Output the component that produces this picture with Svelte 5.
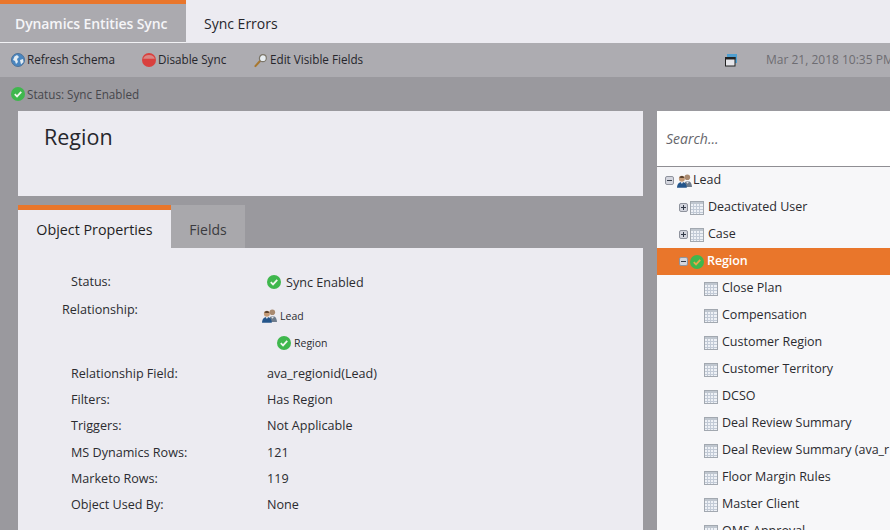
<script>
  const leaves = ['Close Plan','Compensation','Customer Region','Customer Territory','DCSO','Deal Review Summary','Deal Review Summary (ava_r','Floor Margin Rules','Master Client','OMS Approval'];
  const props = [
    ['Relationship Field:','ava_regionid(Lead)'],
    ['Filters:','Has Region'],
    ['Triggers:','Not Applicable'],
    ['MS Dynamics Rows:','121'],
    ['Marketo Rows:','119'],
    ['Object Used By:','None']
  ];
</script>

{#snippet check(size, tick = '#f2f6f0')}
  <svg class="ic" width={size} height={size} viewBox="0 0 16 16"><circle cx="8" cy="8" r="8" fill="#3fb74d"/><path d="M4.300 8.200l2.600 2.600 4.800-5.300" fill="none" stroke={tick} stroke-width="2"/></svg>
{/snippet}
{#snippet users(size)}
  <svg class="ic" width={size} height={size} viewBox="0 0 16 16"><circle cx="11" cy="4.500" r="3" fill="#a98a70"/><path d="M7 15c.3-5 2.200-6.500 4.300-6.500s4.400 1.500 4.700 6.500z" fill="#6f7c8c"/><path d="M9.500 9l1.700 2.500L13 9z" fill="#e6e6ea"/><circle cx="5.200" cy="6" r="3.200" fill="#c49a76"/><path d="M2.500 4.800c1-2.200 4.500-2.200 5.400.2-1.900.6-3.800.5-5.400-.2z" fill="#5a4330"/><path d="M0 15.800c.2-4.800 2.700-6.300 5.200-6.300s5 1.500 5.300 6.300z" fill="#24558a"/><path d="M3.800 9.600l1.400 2.200 1.400-2.200z" fill="#e6e6ea"/></svg>
{/snippet}
{#snippet table()}
  <svg class="tb" width="14" height="14" viewBox="0 0 14 14"><rect x=".5" y=".5" width="13" height="13" fill="#eef1f6" stroke="#a2a8b0"/><rect x="1" y="1" width="12" height="2" fill="#bfc6cf"/><path d="M1 5.500h12M1 8.500h12M1 11.500h12M3.500 3v10M6.500 3v10M9.500 3v10" stroke="#c2cad6" stroke-width="1"/></svg>
{/snippet}
{#snippet toggle(plus)}
  <svg class="ic" width="9" height="9" viewBox="0 0 9 9"><rect x=".5" y=".5" width="8" height="8" rx="1.500" fill="#d3d5de" stroke="#8f939d"/><path d={plus ? 'M2 4.500h5M4.500 2v5' : 'M2 4.500h5'} stroke="#333a48" stroke-width="1"/></svg>
{/snippet}

<div class="page">
  <nav class="tabs">
    <div class="tab active">Dynamics Entities Sync</div>
    <div class="tab second-tab">Sync Errors</div>
  </nav>

  <div class="toolbar">
    <span class="tool first">
      <svg class="ic" width="14" height="14" viewBox="0 0 14 14"><circle cx="7" cy="7" r="6.500" fill="#4a86c0" stroke="#4d7198"/><path d="M3.500 3.500l2.500-1.500 2 2-2 2 1 3-2 2-1-3-2-1zM9 7l3-1 .5 3-2.500 2.500z" fill="#e3ecf2"/></svg>
      <span>Refresh Schema</span>
    </span>
    <span class="tool second">
      <svg class="ic" width="14" height="14" viewBox="0 0 14 14"><circle cx="7" cy="7" r="7" fill="#d9403e"/><path d="M1.200 5.800a5.900 4.700 0 0 1 11.600 0z" fill="#d98583"/></svg>
      <span>Disable Sync</span>
    </span>
    <span class="tool third">
      <svg class="ic" width="14" height="15" viewBox="0 0 15 15"><path d="M1.500 13.500L6.500 8" stroke="#a8772f" stroke-width="2.200" stroke-linecap="round"/><circle cx="9.500" cy="5" r="3.700" fill="#e8eef2" stroke="#7c766a" stroke-width="1.300"/></svg>
      <span>Edit Visible Fields</span>
    </span>
    <svg class="win" width="12" height="13" viewBox="0 0 12 13"><rect x="2" y="0" width="10" height="9" fill="#4f9fd0"/><rect x=".5" y="3.500" width="9.500" height="8.500" fill="#e6e6ea" stroke="#222"/><rect x="0" y="3" width="10.500" height="2.500" fill="#222"/></svg>
    <span class="date">Mar 21, 2018 10:35 PM</span>
  </div>

  <div class="statusbar">
    {@render check(14)}
    <span>Status: Sync Enabled</span>
  </div>

  <div class="main">
    <div class="left">
      <header class="title"><h1>Region</h1></header>
      <div class="subtabs">
        <div class="subtab on">Object Properties</div>
        <div class="subtab">Fields</div>
      </div>
      <section class="content">
        <div class="row status"><span class="lab">Status:</span><span class="val">{@render check(14)}<span>Sync Enabled</span></span></div>
        <div class="rel">
          <span class="lab rlab">Relationship:</span>
          <div class="reltree">
            <div class="rel1">{@render users(15)}<span>Lead</span></div>
            <div class="rel2">{@render check(14)}<span>Region</span></div>
          </div>
        </div>
        <div class="rows">
          {#each props as [k, v]}
            <div class="row"><span class="lab">{k}</span><span class="val">{v}</span></div>
          {/each}
        </div>
      </section>
    </div>

    <aside class="right">
      <div class="search">Search...</div>
      <div class="tree">
        <div class="node l0">{@render toggle(false)}{@render users(15)}<span>Lead</span></div>
        <div class="node l1">{@render toggle(true)}{@render table()}<span>Deactivated User</span></div>
        <div class="node l1">{@render toggle(true)}{@render table()}<span>Case</span></div>
        <div class="node l1 sel">{@render toggle(false)}{@render check(14, '#e9a64a')}<span>Region</span></div>
        {#each leaves as l}
          <div class="node l2">{@render table()}<span>{l}</span></div>
        {/each}
      </div>
    </aside>
  </div>
</div>

<style>
  :global(body) { margin: 0; overflow: hidden; }
  .page { width: 890px; height: 530px; overflow: hidden; background: #9a999e; font-family: "Open Sans", sans-serif; color: #2b2b30; display: flex; flex-direction: column; }
  .ic { flex: none; display: block; filter: blur(0.3px); }
  .tb { flex: none; display: block; }

  .tabs { display: flex; height: 43px; box-sizing: border-box; background: #ecebf1; flex: none; }
  .tab { font-size: 14px; height: 43px; box-sizing: border-box; padding: 0 18px; color: #26262c; }
  .second-tab { line-height: 48px; }
  .tab.active { width: 186px; padding: 0 0 0 15px; line-height: 40px; background: #abaaaf; color: #f5f5f8; border-top: 4px solid #e9762b; border-bottom: 1px solid #f2f2f5; font-weight: 600; letter-spacing: -0.1px; }

  .toolbar { position: relative; height: 34px; flex: none; background: #adacb1; display: flex; align-items: center; font-size: 11.700px; color: #26262c; }
  .tool { display: flex; align-items: center; gap: 2px; }
  .tool span { margin-bottom: 2px; }
  .first { margin-left: 11px; width: 131px; }
  .second { width: 112px; }
  .win { position: absolute; left: 725px; top: 11px; }
  .date { position: absolute; left: 766px; top: 8px; white-space: nowrap; color: #6d6c72; font-size: 12px; }

  .statusbar { height: 34px; flex: none; display: flex; align-items: center; gap: 2px; padding-left: 11px; font-size: 11.700px; color: #47474c; }

  .main { display: flex; flex: 1; min-height: 0; padding-left: 18px; }
  .left { width: 625px; display: flex; flex-direction: column; }
  .title { height: 85px; box-sizing: border-box; background: #ecebf1; padding: 10px 0 0 26px; }
  h1 { margin: 0; font-size: 21.500px; line-height: 32px; font-weight: 400; color: #26262c; }
  .subtabs { margin-top: 9px; display: flex; height: 43px; flex: none; }
  .subtab { width: 74px; box-sizing: border-box; background: #a9a8ac; font-size: 14px; text-align: center; line-height: 49px; color: #3b3b40; }
  .subtab.on { width: 153px; background: #ecebf1; border-top: 5px solid #e9762b; line-height: 39px; color: #1f1f24; font-size: 14.300px; }
  .content { flex: 1; background: #ecebf1; font-size: 12.600px; color: #2b2b30; padding-top: 21px; }
  .row { display: flex; height: 26.300px; align-items: center; }
  .lab { display: block; width: 196px; margin-left: 53px; flex: none; }
  .val { display: flex; align-items: center; gap: 5px; }
  .status { height: 26px; }
  .status .lab { margin-bottom: 2px; }
  .rel { display: flex; height: 65px; padding-top: 5px; box-sizing: border-box; }
  .rlab { width: 200px; margin-left: 44px; line-height: 20px; }
  .reltree { font-size: 10.500px; padding-top: 2px; }
  .rel1 { display: flex; align-items: center; gap: 3px; height: 27px; }
  .rel2 { display: flex; align-items: center; gap: 3px; height: 27px; margin-left: 15px; }

  .right { width: 233px; margin-left: 14px; display: flex; flex-direction: column; flex: none; }
  .search { height: 56px; box-sizing: border-box; background: #fff; border-bottom: 1px solid #8f8e93; padding-left: 9px; line-height: 55px; font-style: italic; font-size: 14px; color: #66666b; }
  .tree { flex: 1; background: #f7f7f9; font-size: 12.500px; color: #2b2b30; }
  .node { height: 27px; display: flex; align-items: center; white-space: nowrap; }
  .node span { margin-bottom: 2px; }
  .l0 { padding-left: 8px; gap: 3px; }
  .l0 span { margin-left: -2px; }
  .l1 { padding-left: 22px; gap: 2px; }
  .l1 span { margin-left: 2px; }
  .l2 { padding-left: 47px; }
  .l2 span { margin-left: 4px; }
  .sel { background: #e9762b; color: #fff; font-weight: 600; letter-spacing: -0.1px; }
  .sel span { margin-left: 1px; }
</style>
